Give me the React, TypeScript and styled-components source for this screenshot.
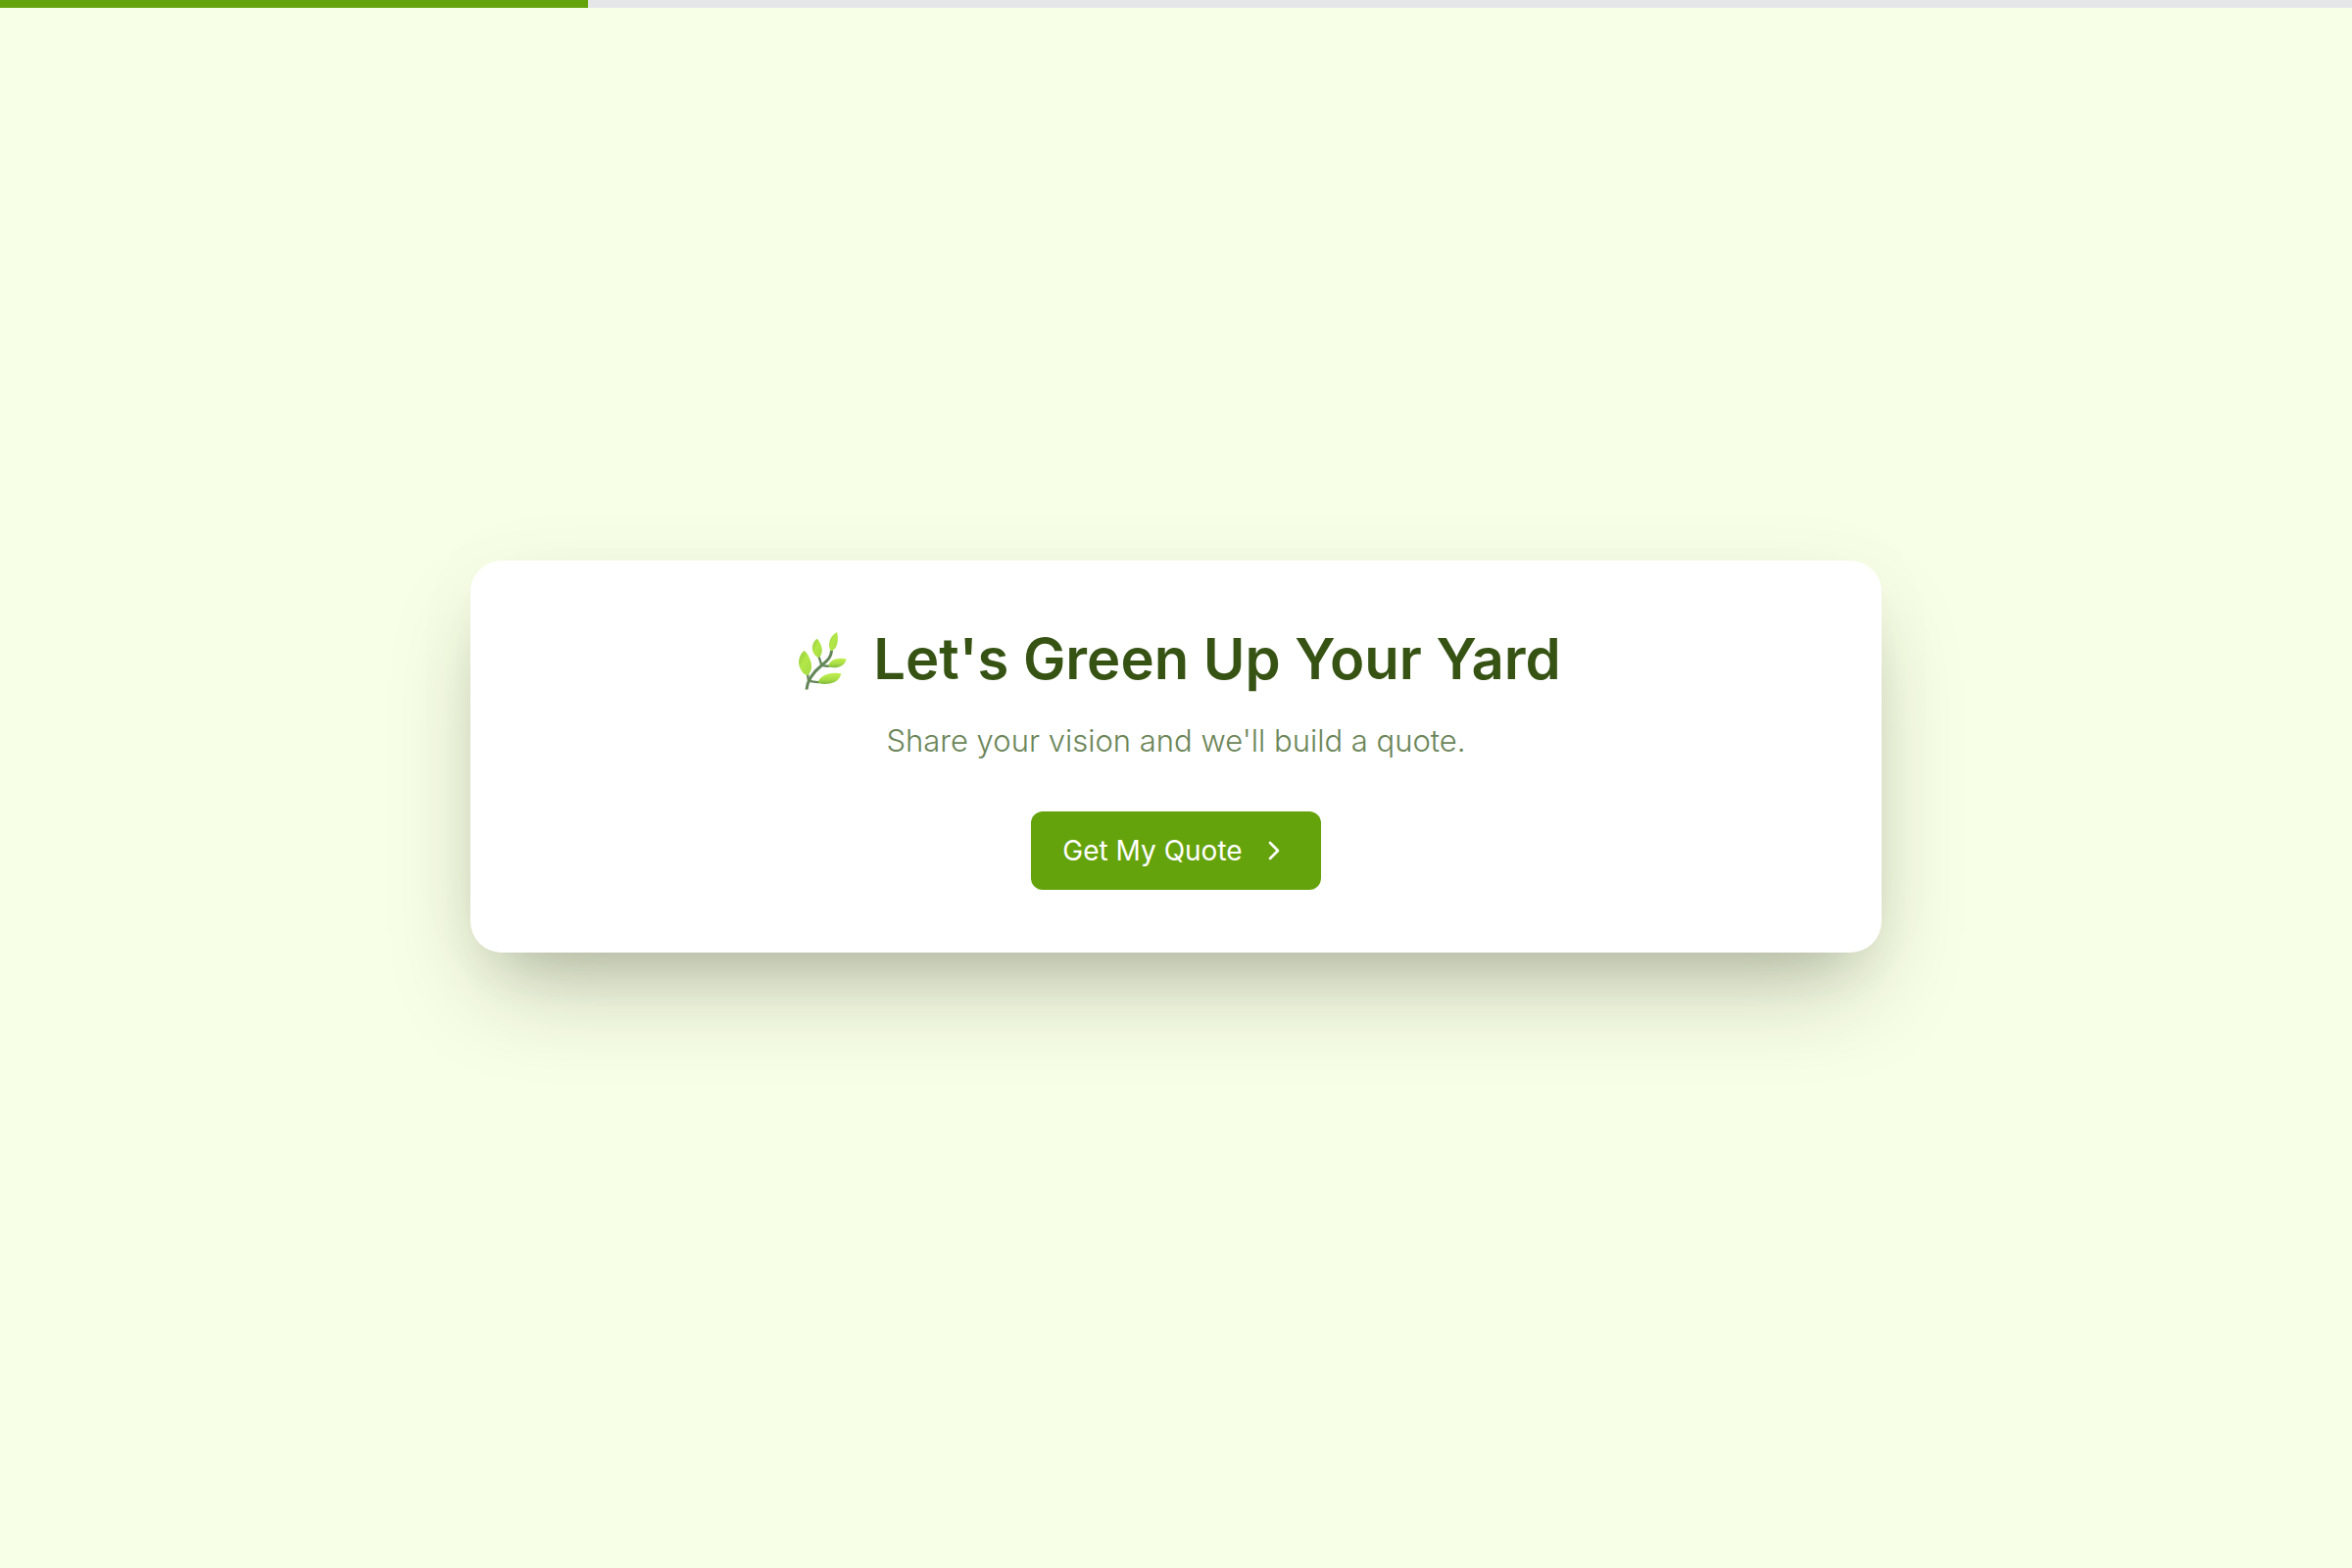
import React from 'react';
import styled, { createGlobalStyle } from 'styled-components';
import { ChevronRight } from 'lucide-react';

const GlobalStyle = createGlobalStyle`
  *, *::before, *::after { box-sizing: border-box; }
  body {
    margin: 0;
    background: #f8ffe7;
    font-family: Inter, "Open Sans", sans-serif;
    -webkit-font-smoothing: antialiased;
  }
`;

const Page = styled.div`
  display: flex;
  flex-direction: column;
  min-height: 100vh;
`;

const ProgressTrack = styled.div`
  height: 8px;
  background: #e4e6e8;
`;

const ProgressFill = styled.div<{ $percent: number }>`
  width: ${({ $percent }) => $percent}%;
  height: 100%;
  background: #65a30d;
`;

const Main = styled.main`
  flex: 1;
  display: flex;
  align-items: center;
  justify-content: center;
  padding-bottom: 64px;
`;

const Card = styled.section`
  display: flex;
  flex-direction: column;
  align-items: center;
  width: 60%;
  min-width: 320px;
  padding: 64px;
  border-radius: 32px;
  background: #ffffff;
  box-shadow:
    0 50px 100px -20px rgba(30, 30, 10, 0.26),
    0 30px 60px -30px rgba(0, 0, 0, 0.14),
    0 0 80px 0 rgba(40, 120, 60, 0.03);
  text-align: center;
`;

const Title = styled.h1`
  display: flex;
  align-items: center;
  gap: 20px;
  margin: 0 0 20px;
  color: #365314;
  font-size: 58px;
  font-weight: 600;
  line-height: 72px;
`;

const Subtitle = styled.p`
  margin: 0 0 44px;
  color: #6b8558;
  font-size: 31px;
  font-weight: 300;
  line-height: 56px;
`;

const QuoteButton = styled.button`
  display: inline-flex;
  align-items: center;
  gap: 16px;
  height: 80px;
  padding: 0 32px;
  border: 0;
  border-radius: 12px;
  background: #65a30d;
  color: #ffffff;
  font-family: inherit;
  font-size: 28px;
  font-weight: 400;
  line-height: 40px;
  cursor: pointer;
`;

function HerbIcon() {
  return (
    <svg width="64" height="66" viewBox="24 12 192 198" fill="none" aria-hidden="true">
      <defs>
        <linearGradient id="leaf" x1="0" y1="0" x2="1" y2="1">
          <stop offset="0" stopColor="#8fc83c" />
          <stop offset="0.45" stopColor="#b4e848" />
          <stop offset="1" stopColor="#a2d844" />
        </linearGradient>
        <linearGradient id="leafShade" x1="0" y1="0" x2="0" y2="1">
          <stop offset="0" stopColor="#c2f04e" />
          <stop offset="0.6" stopColor="#a6dc45" />
          <stop offset="1" stopColor="#7fb83c" />
        </linearGradient>
      </defs>
      <g stroke="#64875a" strokeLinecap="round">
        <path d="M72 206C75 176 96 150 118 132C138 117 147 106 149 86" strokeWidth="9" strokeLinecap="butt" />
        <path d="M78 180L75 157M118 131L110 106M118 131Q130 136 145 133M80 179Q94 184 112 183" strokeWidth="7" />
      </g>
      <path d="M65 87C50 98 43 122 53 142C59 155 68 163 76 162C86 154 91 137 84 117C80 104 73 93 65 87Z" fill="url(#leaf)" />
      <path d="M104 50C93 58 87 73 91 88C94 99 103 108 111 108C119 99 122 86 117 72C114 62 109 54 104 50Z" fill="url(#leaf)" />
      <path d="M165 30C151 38 143 50 141 66C140 77 143 86 149 88C158 84 165 74 167 60C168 49 168 38 165 30Z" fill="url(#leaf)" />
      <path d="M194 113C178 108 158 111 147 120C141 125 138 131 140 136C151 141 169 140 181 132C188 127 192 120 194 113Z" fill="url(#leafShade)" />
      <path d="M178 157C157 153 132 157 118 168C111 174 107 180 108 185C121 191 142 190 158 183C170 177 176 167 178 157Z" fill="url(#leafShade)" />
    </svg>
  );
}

export default function App() {
  return (
    <Page>
      <GlobalStyle />
      <ProgressTrack role="progressbar" aria-label="Quote progress" aria-valuenow={25} aria-valuemin={0} aria-valuemax={100}>
        <ProgressFill $percent={25} />
      </ProgressTrack>
      <Main>
        <Card>
          <Title>
            <HerbIcon />
            Let's Green Up Your Yard
          </Title>
          <Subtitle>Share your vision and we'll build a quote.</Subtitle>
          <QuoteButton type="button">
            Get My Quote
            <ChevronRight size={32} aria-hidden="true" />
          </QuoteButton>
        </Card>
      </Main>
    </Page>
  );
}
